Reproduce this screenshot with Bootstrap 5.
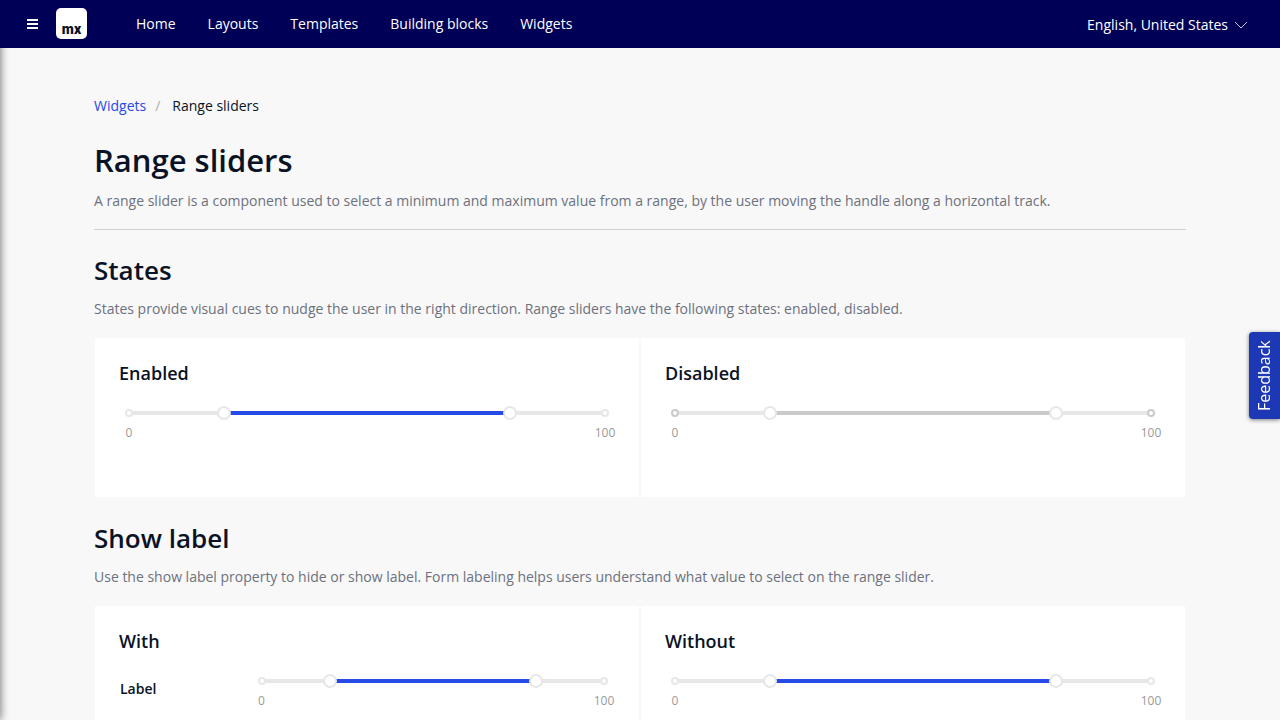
<!DOCTYPE html>
<html lang="en">
<head>
<meta charset="utf-8">
<meta name="viewport" content="width=device-width, initial-scale=1">
<title>Range sliders</title>
<link href="https://cdn.jsdelivr.net/npm/bootstrap@5.3.0/dist/css/bootstrap.min.css" rel="stylesheet">
<style>
  body { font-family: "Open Sans", sans-serif; font-size: 14px; line-height: 20px; color: #0a1325; background: #f8f8f8; }
  a { text-decoration: none; }
  .topbar { height: 48px; background: #000056; padding: 0 33px 0 24px; position: relative; z-index: 3; }
  .topbar .nav-link { color: #fff; padding: 0 16px; }
  .menu-toggle, .language { background: none; border: 0; color: #fff; padding: 0; }
  .menu-toggle { width: 16px; line-height: 0; }
  .language { padding-top: 2px; gap: 7px; }
  .brand-tile { width: 31px; height: 31px; margin: 0 33px 1px 16px; padding-top: 11px; border-radius: 5px; background: #fff; color: #0a1325; font: 900 14px/20px Roboto, sans-serif; text-align: center; }
  .edge-shadow { position: fixed; top: 0; bottom: 0; left: -10px; width: 10px; box-shadow: 0 0 10px rgba(0,0,0,.6); z-index: 2; }
  main { padding: 48px 94px; }
  .crumbs { margin-bottom: 24px; }
  .crumbs a { color: #264ae5; }
  .crumbs li + li::before { content: "/"; color: #a9acb3; padding: 0 12px 0 9px; }
  h1, h2, h3 { font-weight: 600; }
  h1 { font-size: 31px; line-height: 40px; margin-bottom: 11px; }
  h2 { font-size: 26px; line-height: 32px; margin: 24px 0 13px; }
  h3 { font-size: 18px; line-height: 24px; margin-bottom: 26px; }
  .intro { color: #6c717e; margin-bottom: 18px; }
  .rule { border: 0; border-top: 1px solid #ced0d3; opacity: 1; margin: 0; }
  .panel { background: #fff; border: 1px solid #f8f8f8; padding: 23px 24px; min-height: 161px; }
  .slider-label { font-weight: 600; }
  .slider { --fill: #264ae5; --dot: #e7e7e7; padding: 0 10px; }
  .slider.is-off { --fill: #cacaca; --dot: #cacaca; }
  .labelled { padding: 0 1px; }
  .labelled .slider { padding-left: 18px; }
  .slider-track { position: relative; height: 4px; border-radius: 2px; background: linear-gradient(90deg, #e7e7e7 20%, var(--fill) 20% 80%, #e7e7e7 80%); }
  .slider-track::before, .slider-track::after { content: ""; position: absolute; top: -2px; width: 8px; height: 8px; border: 2px solid var(--dot); border-radius: 50%; background: #fff; }
  .slider-track::before { left: -4px; }
  .slider-track::after { right: -4px; }
  .slider-track input { position: absolute; top: -5px; left: -7px; width: calc(100% + 14px); height: 14px; margin: 0; background: none; appearance: none; pointer-events: none; z-index: 1; }
  .slider-track input::-webkit-slider-thumb { appearance: none; width: 14px; height: 14px; border: 2px solid #e7e7e7; border-radius: 50%; background: #fff; pointer-events: auto; }
  .slider-track input::-moz-range-thumb { box-sizing: border-box; width: 14px; height: 14px; border: 2px solid #e7e7e7; border-radius: 50%; background: #fff; pointer-events: auto; }
  .slider-marks { font-size: 12px; line-height: 16px; color: #999; margin-top: 10px; }
  .slider-marks span { width: 24px; text-align: center; }
  .slider-marks span:first-child { margin-left: -12px; }
  .slider-marks span:last-child { margin-right: -12px; }
  .feedback { position: fixed; right: 0; top: 332px; width: 31px; height: 87px; padding: 0; border: 0; border-radius: 4px 0 0 4px; background: #1d38b5; color: #fff; box-shadow: 0 1px 4px rgba(0,0,0,.5); font-size: 16px; line-height: 31px; writing-mode: vertical-rl; z-index: 4; }
  .feedback span { display: block; transform: rotate(180deg); }
</style>
</head>
<body>
<header class="topbar d-flex align-items-center">
  <button class="menu-toggle" type="button" aria-label="Menu">
    <svg width="16" height="16" viewBox="0 0 16 16" fill="#fff"><path d="M3 3h11v2H3zM3 7h11v2H3zM3 11h11v2H3z"/></svg>
  </button>
  <a class="brand-tile" href="#">mx</a>
  <nav class="nav flex-nowrap me-auto">
    <a class="nav-link" href="#">Home</a>
    <a class="nav-link" href="#">Layouts</a>
    <a class="nav-link" href="#">Templates</a>
    <a class="nav-link" href="#">Building blocks</a>
    <a class="nav-link" href="#">Widgets</a>
  </nav>
  <button class="language d-flex align-items-center text-nowrap" type="button">English, United States
    <svg width="12" height="8" viewBox="0 0 12 8" fill="none" stroke="#fff" stroke-width=".8"><path d="M0 1l6 6 6-6"/></svg>
  </button>
</header>
<div class="edge-shadow"></div>
<main>
  <ol class="crumbs list-unstyled d-flex">
    <li><a href="#">Widgets</a></li>
    <li>Range sliders</li>
  </ol>
  <h1>Range sliders</h1>
  <p class="intro">A range slider is a component used to select a minimum and maximum value from a range, by the user moving the handle along a horizontal track.</p>
  <hr class="rule">

  <section>
    <h2>States</h2>
    <p class="intro">States provide visual cues to nudge the user in the right direction. Range sliders have the following states: enabled, disabled.</p>
    <div class="row g-0">
      <div class="col-6 panel">
        <h3>Enabled</h3>
        <div class="slider">
          <div class="slider-track">
            <input type="range" value="20" aria-label="Enabled minimum">
            <input type="range" value="80" aria-label="Enabled maximum">
          </div>
          <div class="slider-marks d-flex justify-content-between"><span>0</span><span>100</span></div>
        </div>
      </div>
      <div class="col-6 panel">
        <h3>Disabled</h3>
        <div class="slider is-off">
          <div class="slider-track">
            <input type="range" value="20" aria-label="Disabled minimum" disabled>
            <input type="range" value="80" aria-label="Disabled maximum" disabled>
          </div>
          <div class="slider-marks d-flex justify-content-between"><span>0</span><span>100</span></div>
        </div>
      </div>
    </div>
  </section>

  <section>
    <h2>Show label</h2>
    <p class="intro">Use the show label property to hide or show label. Form labeling helps users understand what value to select on the range slider.</p>
    <div class="row g-0">
      <div class="col-6 panel">
        <h3>With</h3>
        <div class="labelled row g-0">
          <label class="col slider-label" for="with-min">Label</label>
          <div class="col-9 slider">
            <div class="slider-track">
              <input type="range" value="20" id="with-min">
              <input type="range" value="80" aria-label="Label maximum">
            </div>
            <div class="slider-marks d-flex justify-content-between"><span>0</span><span>100</span></div>
          </div>
        </div>
      </div>
      <div class="col-6 panel">
        <h3>Without</h3>
        <div class="slider">
          <div class="slider-track">
            <input type="range" value="20" aria-label="Without minimum">
            <input type="range" value="80" aria-label="Without maximum">
          </div>
          <div class="slider-marks d-flex justify-content-between"><span>0</span><span>100</span></div>
        </div>
      </div>
    </div>
  </section>
</main>
<button class="feedback" type="button"><span>Feedback</span></button>
<script src="https://cdn.jsdelivr.net/npm/bootstrap@5.3.0/dist/js/bootstrap.bundle.min.js"></script>
</body>
</html>
